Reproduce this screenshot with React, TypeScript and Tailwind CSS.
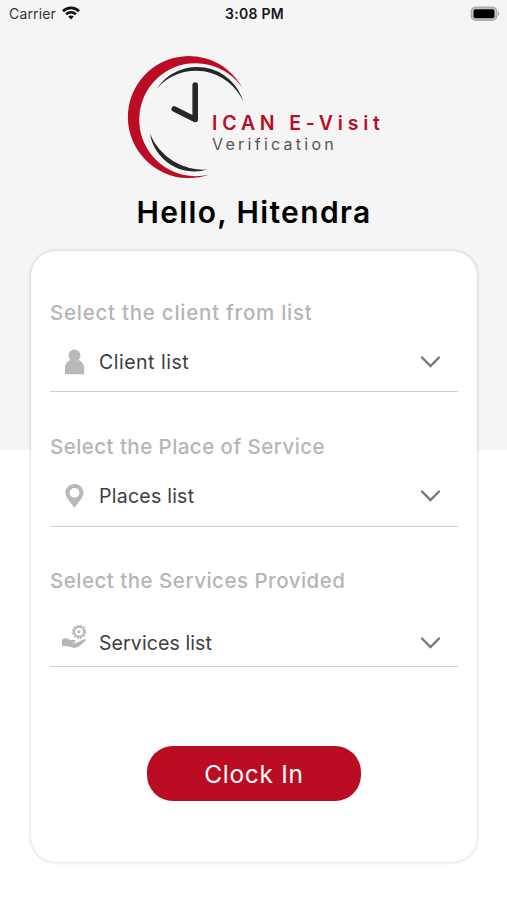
import type { ReactNode } from 'react';
import clsx from 'clsx';

interface SelectFieldProps {
  label: string;
  value: string;
  icon: ReactNode;
  labelClass: string;
  valueClass: string;
  className?: string;
  rowClass: string;
}

function StatusBar() {
  return (
    <div className="flex h-7 items-center justify-between pl-[9px] pr-[7px]">
      <div className="flex w-[160px] items-center gap-[6px]">
        <span className="text-[14px] leading-7 tracking-[0.15px] text-[#333]">Carrier</span>
        <svg className="-mt-[2px]" width="18" height="14" viewBox="0 0 18 14" fill="none" stroke="#111" strokeWidth="2.6">
          <path d="M1 5.2C5.5 .8 12.500 .8 17 5.200" />
          <path d="M4.100 8.300C6.900 5.600 11.100 5.600 13.900 8.300" />
          <path d="M9 13.500 6.200 10.600C7.800 9.200 10.200 9.200 11.800 10.600Z" fill="#111" stroke="none" />
        </svg>
      </div>
      <span className="text-[14px] font-semibold leading-7 tracking-[0.3px] text-[#161616]">3:08 PM</span>
      <div className="-mt-[2px] flex w-[160px] justify-end">
        <svg width="30" height="15" viewBox="0 0 30 15">
          <rect x="1.500" y="1.500" width="25" height="12.500" rx="4" fill="#d8d8d8" stroke="#adadad" strokeWidth="1.800" />
          <rect x="3.500" y="3.300" width="21" height="8.900" rx="1.800" fill="#000" />
          <path d="M27.800 5.500c1.800.7 1.800 3.900 0 4.600z" fill="#aaa" />
        </svg>
      </div>
    </div>
  );
}

function Logo() {
  return (
    <div className="ml-[126px] mt-[25px] flex h-[126px]">
      <svg className="shrink-0" width="120" height="126" viewBox="126.500 54 120 126">
        <path d="M243 89A61 61 0 1 0 210 175.500A56.500 56.500 0 1 1 243 89Z" fill="#ba0c22" />
        <path d="M157 90A48.200 48.200 0 0 1 244 103.500A51.500 51.500 0 0 0 157 90Z" fill="#242827" />
        <path d="M150.500 135A45 45 0 0 0 208 170.500A58 58 0 0 1 150.500 135Z" fill="#242827" />
        <path
          d="M195.700 86V120.500L174.800 110"
          fill="none"
          stroke="#242827"
          strokeWidth="5.600"
          strokeLinecap="round"
          strokeLinejoin="round"
        />
      </svg>
      <div className="-ml-[34px] pt-[58px]">
        <p className="whitespace-nowrap text-[19.5px] font-semibold leading-6 tracking-[4.8px] text-[#ba0c22]">
          ICAN E-Visit
        </p>
        <p className="-mt-px whitespace-nowrap text-[16px] leading-5 tracking-[3.25px] text-[#555]">
          Verification
        </p>
      </div>
    </div>
  );
}

function PersonIcon() {
  return (
    <svg width="20" height="26" viewBox="0 0 20 26" fill="#b9b9b9">
      <circle cx="9.500" cy="6.500" r="6" />
      <path d="M0 25.200V19.500C0 15.300 2.400 12 5.400 10.900c2.400 1.400 5.800 1.400 8.200 0 3 1.100 5.600 4.400 5.600 8.600v5.700Z" />
    </svg>
  );
}

function PinIcon() {
  return (
    <svg width="20" height="26" viewBox="0 0 20 26" fill="#b9b9b9">
      <path
        fillRule="evenodd"
        d="M9.500 1C4.400 1 .5 4.700.5 9.600.5 15.200 6.200 19.600 9.500 25c3.300-5.400 9-9.800 9-15.400C18.500 4.700 14.600 1 9.500 1Zm0 3.900a4.900 4.900 0 1 1 0 9.800A4.900 4.900 0 0 1 9.500 4.900Z"
      />
    </svg>
  );
}

function HandGearIcon() {
  return (
    <svg width="26" height="26" viewBox="0 0 26 26" fill="#b5b5b5">
      <circle cx="17" cy="7.800" r="6.500" fill="none" stroke="#b5b5b5" strokeWidth="1.400" strokeDasharray="2 1.403" />
      <circle cx="17" cy="7.800" r="5" fill="none" stroke="#b5b5b5" strokeWidth="1.900" />
      <circle cx="17" cy="7.800" r="1.500" />
      <path d="M0 15.700c2.600-1.900 5.400-1.800 8.200.2l4.300.2c1.600.2 1.600 2.300 0 2.500l-3.300.1c2.200.8 4.200.7 6.200-.3l6.600-3.200c1.500-.6 2.400.7 1.300 1.700-3 2.900-6 5.400-8.900 6.500-2.600.9-5.600-.2-8.200-1.200L0 22Z" />
    </svg>
  );
}

function SelectField({ label, value, icon, labelClass, valueClass, className, rowClass }: SelectFieldProps) {
  return (
    <div className={clsx('flex flex-col border-b border-[#cfcfcf]', className)}>
      <span className={clsx('whitespace-nowrap text-[20.5px] font-medium leading-6 text-[#b5b5b5]', labelClass)}>
        {label}
      </span>
      <button className={clsx('flex w-full items-center pr-[17px] text-left', rowClass)}>
        <span className="flex w-[49px] justify-center">{icon}</span>
        <span className={clsx('flex-1 whitespace-nowrap text-[19.5px] leading-6 text-[#3d3d3d]', valueClass)}>
          {value}
        </span>
        <svg width="21" height="14" viewBox="0 0 21 14" fill="none" stroke="#777" strokeWidth="2.300">
          <path d="M2 2.500 10.500 11 19 2.500" strokeLinecap="round" />
        </svg>
      </button>
    </div>
  );
}

export default function App() {
  return (
    <div className="h-[900px] w-[507px] overflow-hidden bg-[linear-gradient(#f5f5f5_450px,#fff_450px)] font-['Inter',sans-serif]">
      <StatusBar />
      <Logo />
      <h1 className="mt-[15px] h-[36px] whitespace-nowrap pl-px text-center text-[30px] font-semibold leading-9 tracking-[1.35px] text-black">
        Hello, Hitendra
      </h1>
      <main className="ml-[31px] mr-[30px] mt-[21px] flex h-[611px] flex-col rounded-[25px] bg-white px-[19px] pt-[50px] shadow-[0_0_3px_1px_rgba(0,0,0,0.13)]">
        <SelectField
          label="Select the client from list"
          value="Client list"
          icon={<PersonIcon />}
          className="h-[91px]"
          rowClass="mt-[12px] h-[50px]"
          labelClass="tracking-[0.75px]"
          valueClass="tracking-[0.5px]"
        />
        <SelectField
          label="Select the Place of Service"
          value="Places list"
          icon={<PinIcon />}
          className="mt-[43px] h-[92px]"
          rowClass="mt-[12px] h-[50px]"
          labelClass="tracking-[0.45px]"
          valueClass="tracking-[0.25px]"
        />
        <SelectField
          label="Select the Services Provided"
          value="Services list"
          icon={<span className="-mt-3"><HandGearIcon /></span>}
          className="mt-[42px] h-[98px]"
          rowClass="mt-[26px] h-[50px]"
          labelClass="tracking-[0.5px]"
          valueClass="tracking-[0.1px]"
        />
        <button className="ml-[97px] mt-[79px] h-[55px] w-[214px] rounded-[26px] bg-[#ba0c22] pt-px text-[24.5px] tracking-[0.7px] text-white">
          Clock In
        </button>
      </main>
    </div>
  );
}
